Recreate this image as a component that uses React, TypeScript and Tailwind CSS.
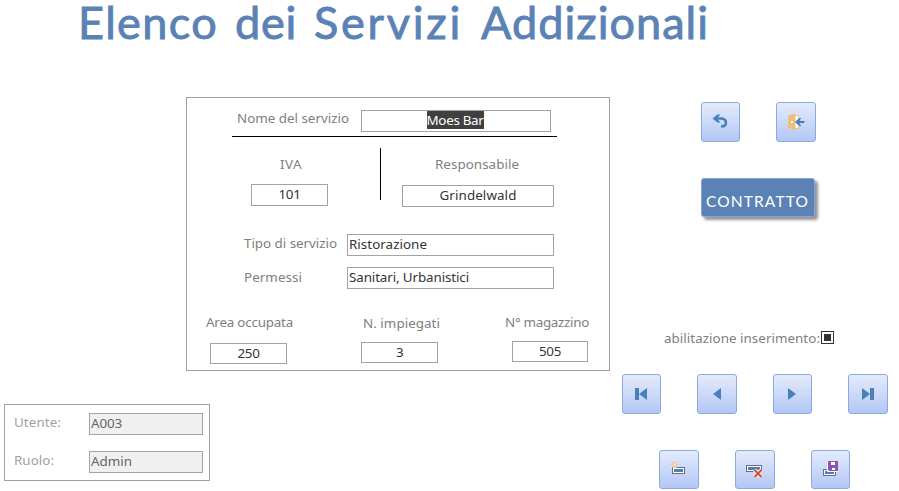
import { useLayoutEffect, useRef, type ReactNode } from 'react';

type FitProps = { text: string; width: number; className?: string };

/** Single line of text whose tracking is adjusted so that it spans `width` pixels. */
function Fit({ text, width, className = '' }: FitProps) {
  const ref = useRef<HTMLSpanElement>(null);
  useLayoutEffect(() => {
    const el = ref.current;
    if (!el) return;
    el.style.letterSpacing = '0px';
    const natural = el.getBoundingClientRect().width;
    el.style.letterSpacing = `${(width - natural) / text.length}px`;
  }, [text, width]);
  return (
    <span ref={ref} className={`inline-block whitespace-pre ${className}`}>
      {text}
    </span>
  );
}

function Label({ text, width, className = '' }: FitProps) {
  return (
    <div className={`shrink-0 whitespace-nowrap text-[#808080] ${className}`}>
      <Fit text={text} width={width} />
    </div>
  );
}

function Field({ text, width, className = '' }: FitProps) {
  return (
    <div className={`shrink-0 border border-[#a3a3a3] leading-[18px] text-[#333] ${className}`}>
      <Fit text={text} width={width} />
    </div>
  );
}

function IconButton({ label, className = '', children }: { label: string; className?: string; children: ReactNode }) {
  return (
    <button
      aria-label={label}
      className={`shrink-0 overflow-hidden rounded-[3px] border border-[#8caae2] bg-linear-to-b from-[#e4ebfb] to-[#b3c7f5] ${className}`}
    >
      <svg width="38" height="38" viewBox="1 1 38 38" className="block max-w-none">
        {children}
      </svg>
    </button>
  );
}

function RecordBox({ x, y, w }: { x: number; y: number; w: number }) {
  return (
    <g shapeRendering="crispEdges">
      <rect x={x} y={y} width={w} height="7" fill="#6e6e6e" />
      <rect x={x + 1} y={y + 1} width={w - 2} height="5" fill="#fff" />
      <rect x={x + 2} y={y + 2} width={w - 4} height="3" fill="#4a80b8" />
    </g>
  );
}

export default function App() {
  return (
    <div className="h-[491px] w-[899px] overflow-hidden bg-white font-['Noto_Sans',sans-serif] text-[13.4px] leading-4">
      <h1 className="flex h-[97px] font-['Lato',sans-serif] text-[45px] leading-[44px] text-[#5b82b5] [-webkit-text-stroke:0.9px_#5b82b5]">
        <Fit text="Elenco" width={140} className="ml-[78px]" />
        <Fit text="dei" width={62} className="ml-[17px]" />
        <Fit text="Servizi" width={149} className="ml-[17px]" />
        <Fit text="Addizionali" width={228} className="ml-[18px]" />
      </h1>

      <div className="flex">
        <div className="w-[611px] shrink-0">
          <section className="ml-[186px] h-[274px] w-[424px] border border-[#a0a0a0]">
            <div className="mt-3 flex items-start">
              <Label text="Nome del servizio" width={112} className="ml-[50px] w-[124px]" />
              <div className="h-[22px] w-[190px] border border-[#a3a3a3] pr-0.5 text-center leading-[18px] text-white">
                <Fit text="Moes Bar" width={57} className="h-[18px] bg-[#404040]" />
              </div>
            </div>
            <div className="mt-1 ml-[45px] h-px w-[325px] bg-black" />

            <div className="flex h-[70px]">
              <div className="ml-16 w-[77px] pt-[19px]">
                <Label text="IVA" width={22} className="ml-[29px]" />
                <Field text="101" width={22} className="mt-3 h-[22px] text-center" />
              </div>
              <div className="mt-[11px] ml-[52px] h-[52px] w-px bg-black" />
              <div className="ml-[21px] w-[152px] pt-[19px]">
                <Label text="Responsabile" width={84} className="ml-[33px]" />
                <Field text="Grindelwald" width={77} className="mt-[13px] h-[22px] text-center" />
              </div>
            </div>

            <div className="mt-[27px] flex">
              <Label text="Tipo di servizio" width={93} className="ml-[57px] w-[103px] leading-[18px]" />
              <Field text="Ristorazione" width={78} className="h-[22px] w-[207px] pl-px" />
            </div>
            <div className="mt-[11px] flex">
              <Label text="Permessi" width={58} className="ml-[57px] w-[103px] leading-5" />
              <Field text="Sanitari, Urbanistici" width={120} className="h-[22px] w-[207px] pl-px" />
            </div>

            <div className="mt-[25px] flex">
              <div className="ml-[19px] w-[87px]">
                <Label text="Area occupata" width={87} />
                <Field text="250" width={22} className="mt-[13px] ml-1 h-[21px] w-[77px] text-center" />
              </div>
              <div className="ml-[68px] w-[79px] pt-px">
                <Label text="N. impiegati" width={77} className="ml-[2px]" />
                <Field text="3" width={7} className="mt-[11px] h-[21px] w-[77px] text-center" />
              </div>
              <div className="ml-[65px]">
                <Label text="N° magazzino" width={84} />
                <Field text="505" width={22} className="mt-[11px] ml-[7px] h-[21px] w-[76px] text-center" />
              </div>
            </div>
          </section>

          <section className="mt-[33px] ml-1 h-[77px] w-[206px] border border-[#a0a0a0] pt-2">
            <div className="flex">
              <Label text="Utente:" width={47} className="ml-[9px] w-[75px] leading-[18px] text-[#a0a0a0]!" />
              <Field text="A003" width={31} className="h-[22px] w-[114px] bg-[#f0f0f0] pl-px text-[#666]!" />
            </div>
            <div className="mt-4 flex">
              <Label text="Ruolo:" width={40} className="ml-[9px] w-[75px] leading-[18px] text-[#a0a0a0]!" />
              <Field text="Admin" width={41} className="h-[22px] w-[114px] bg-[#f0f0f0] pl-px text-[#666]!" />
            </div>
          </section>
        </div>

        <div className="flex flex-col items-start">
          <div className="mt-[5px] ml-[90px] flex gap-9">
            <IconButton label="Annulla" className="h-10 w-[39px]">
              <path d="M13.5 16.5H19.5C23.5 16.5 25 18.5 25 20.8C25 23.3 23 24.5 20 24.5" fill="none" stroke="#4a80b8" strokeWidth="2.5" />
              <path d="M11.5 16.5L16.5 12.5H19.5L15.8 16.5L19.5 20.5H16.5Z" fill="#4a80b8" />
            </IconButton>
            <IconButton label="Esci" className="size-10">
              <path d="M19 13.5H22.5V26.5H19Z" fill="#fff" stroke="#ecc07c" />
              <path d="M12 13.5L19 11.5V28L12 26Z" fill="#ecc07c" />
              <rect x="15" y="19" width="2" height="2" fill="#fff" />
              <path d="M19 20L23.5 15.8H25.5L23.5 18.7H28.5V21.3H23.5L25.5 24.2H23.5Z" fill="#4a80b8" stroke="#eef2fc" strokeWidth="1" paintOrder="stroke" />
            </IconButton>
          </div>

          <button className="mt-9 ml-[90px] h-[39px] w-[114px] rounded-[3px] border border-[#86a4de] bg-[#5b82b5] pt-1.5 pl-1 text-left font-['Lato',sans-serif] text-[15.5px] text-white shadow-[3px_3px_3px_rgba(0,0,0,0.42)]">
            <Fit text="CONTRATTO" width={103} />
          </button>

          <div className="mt-[113px] ml-[53px] flex items-start">
            <Label text="abilitazione inserimento:" width={156} className="w-[157px]" />
            <div className="mt-px size-[13px] border border-[#333] bg-white p-[2px]">
              <div className="size-[7px] bg-[#333]" />
            </div>
          </div>

          <div className="mt-7 ml-[11px] flex gap-9">
            <IconButton label="Primo record" className="h-10 w-[39px]">
              <path d="M13 14H17V26H13ZM17 20L25 14V26Z" fill="#4a80b8" />
            </IconButton>
            <IconButton label="Record precedente" className="size-10">
              <path d="M16 20L24 14V26Z" fill="#4a80b8" />
            </IconButton>
            <IconButton label="Record successivo" className="h-10 w-[39px]">
              <path d="M23 20L15 14V26Z" fill="#4a80b8" />
            </IconButton>
            <IconButton label="Ultimo record" className="size-10">
              <path d="M22 14H26V26H22ZM22 20L14 14V26Z" fill="#4a80b8" />
            </IconButton>
          </div>

          <div className="mt-9 ml-12 flex gap-9">
            <IconButton label="Nuovo record" className="h-[39px] w-10">
              <RecordBox x={13} y={17} w={13} />
              <circle cx="15.5" cy="14.5" r="3.5" fill="#dfe7fa" />
              <path d="M15.5 11V12.5M15.5 16.5V18M12 14.5H13.5M17.5 14.5H19M13 12L14 13M17 16L18 17M18 12L17 13M14 16L13 17" stroke="#ecb968" />
              <circle cx="15.5" cy="14.5" r="1.5" fill="#fff" stroke="#ecb968" />
            </IconButton>
            <IconButton label="Elimina record" className="h-[39px] w-10">
              <RecordBox x={11} y={15} w={16} />
              <path d="M19.5 20L26.5 27M26.5 20L19.5 27" stroke="#e3eafb" strokeWidth="4" />
              <path d="M19.5 20L26.5 27M26.5 20L19.5 27" stroke="#d7502f" strokeWidth="2" />
            </IconButton>
            <IconButton label="Salva record" className="size-[39px]">
              <RecordBox x={12} y={19} w={13} />
              <g shapeRendering="crispEdges">
                <path d="M16 11H27V22H16Z" fill="#f5f7fd" />
                <path d="M17 11H27V21H18L17 20Z" fill="#8b57ad" />
                <path d="M20 12H24V15H20ZM21 18H24V20H21Z" fill="#fff" />
              </g>
            </IconButton>
          </div>
        </div>
      </div>
    </div>
  );
}
